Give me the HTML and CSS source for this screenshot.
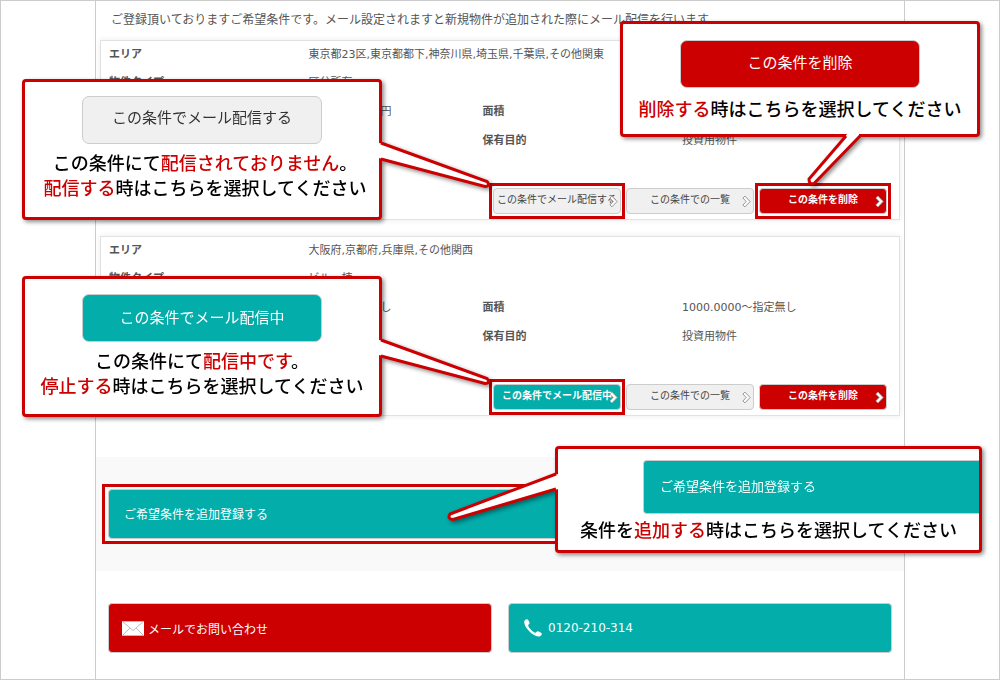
FILE: index.html
```html
<!DOCTYPE html>
<html lang="ja">
<head>
<meta charset="utf-8">
<meta name="viewport" content="width=device-width, initial-scale=1">
<title>ご希望条件</title>
<link rel="stylesheet" href="styles.css">
</head>
<body>
<svg class="defs" aria-hidden="true">
  <symbol id="chevron" viewBox="0 0 10 14"><path d="M1 3.2 3.2 1 9 7 3.2 13 1 10.800 4.700 7Z"/></symbol>
</svg>
<main class="column">
  <p class="intro">ご登録頂いておりますご希望条件です。メール設定されますと新規物件が追加された際にメール配信を行います。</p>

  <section class="card">
    <table class="specs">
      <colgroup><col class="c1"><col class="c2"><col class="c3"><col></colgroup>
      <tr><th>エリア</th><td colspan="3">東京都23区,東京都都下,神奈川県,埼玉県,千葉県,その他関東</td></tr>
      <tr><th>物件タイプ</th><td colspan="3">区分所有</td></tr>
      <tr><th></th><td><span class="amount">円</span></td><th>面積</th><td></td></tr>
      <tr><th></th><td></td><th>保有目的</th><td>投資用物件</td></tr>
    </table>
    <div class="actions">
      <button class="btn marked">この条件でメール配信する<svg class="chev"><use href="#chevron"/></svg></button>
      <button class="btn">この条件での一覧<svg class="chev"><use href="#chevron"/></svg></button>
      <button class="btn red marked">この条件を削除<svg class="chev"><use href="#chevron"/></svg></button>
    </div>
  </section>

  <section class="card">
    <table class="specs">
      <colgroup><col class="c1"><col class="c2"><col class="c3"><col></colgroup>
      <tr><th>エリア</th><td colspan="3">大阪府,京都府,兵庫県,その他関西</td></tr>
      <tr><th>物件タイプ</th><td colspan="3">ビル一棟</td></tr>
      <tr><th></th><td><span class="amount">し</span></td><th>面積</th><td>1000.0000～指定無し</td></tr>
      <tr><th></th><td></td><th>保有目的</th><td>投資用物件</td></tr>
    </table>
    <div class="actions">
      <button class="btn teal marked">この条件でメール配信中<svg class="chev"><use href="#chevron"/></svg></button>
      <button class="btn">この条件での一覧<svg class="chev"><use href="#chevron"/></svg></button>
      <button class="btn red">この条件を削除<svg class="chev"><use href="#chevron"/></svg></button>
    </div>
  </section>

  <div class="band">
    <button class="wide teal marked">ご希望条件を追加登録する</button>
  </div>

  <div class="contacts">
    <button class="wide red">
      <svg class="mail" viewBox="0 0 22 15"><path fill="#fff" d="M0 0h22v15H0z"/><path fill="none" stroke="#bbb" d="M.5.5 11 9.500 21.500.5M.5 14.500 8 7M21.500 14.500 14 7M0 .5h22M0 14.500h22"/></svg>
      メールでお問い合わせ
    </button>
    <button class="wide teal">
      <svg class="phone" viewBox="0 0 18 18"><path fill="#fff" d="M.3 2.200C.8.900 2.200 0 3.300.300c.8.300 2.200 2.700 2.300 3.600.1.900-1.400 1.700-1.400 2.500 0 1.800 5.200 7.200 7 7.300.9 0 1.600-1.500 2.500-1.400.9.100 3.600 1.400 4 2.200.5 1-.7 2.500-2 3C10.800 18.600-1 8.300.300 2.200Z"/></svg>
      0120-210-314
    </button>
  </div>

  <aside class="callout send">
    <button class="sample">この条件でメール配信する</button>
    <p>この条件にて<em>配信されておりません</em>。<br><em>配信する</em>時はこちらを選択してください</p>
    <svg class="tail tail-right" viewBox="0 0 112 50"><path class="fill" d="M0 4 4 5 109 43Q111 47 106 47L4 20 0 19Z"/><path class="line" d="M2 4 108 42.500Q112 47 106 47.500L2 20"/></svg>
  </aside>

  <aside class="callout delete">
    <button class="sample red">この条件を削除</button>
    <p><em>削除する</em>時はこちらを選択してください</p>
    <svg class="tail tail-down" viewBox="0 0 60 56"><path class="fill" d="M42 0 40 3 4 46Q5 51 10 49L54 4V0Z"/><path class="line" d="M41 2 4 45Q4 51 9 49.500L55 2"/></svg>
  </aside>

  <aside class="callout sending">
    <button class="sample teal">この条件でメール配信中</button>
    <p>この条件にて<em>配信中です</em>。<br><em>停止する</em>時はこちらを選択してください</p>
    <svg class="tail tail-right" viewBox="0 0 112 50"><path class="fill" d="M0 4 4 5 109 43Q111 47 106 47L4 20 0 19Z"/><path class="line" d="M2 4 108 42.500Q112 47 106 47.500L2 20"/></svg>
  </aside>

  <aside class="callout add">
    <button class="sample teal">ご希望条件を追加登録する</button>
    <p>条件を<em>追加する</em>時はこちらを選択してください</p>
    <svg class="tail tail-left" viewBox="0 0 112 54"><path class="fill" d="M112 3 109 4 4 43Q1 48 7 48L109 19 112 18Z"/><path class="line" d="M110 3 4 43Q1 48 7 48.500L110 18"/></svg>
  </aside>
</main>
</body>
</html>
```
FILE: styles.css
```css
* { box-sizing: border-box; }

body {
  margin: 0;
  min-height: 100vh;
  display: flex;
  justify-content: center;
  border: 1px solid #ccc;
  background: #fff;
  color: #555;
  font-family: "DejaVu Sans", "Noto Sans CJK JP", sans-serif;
  font-size: 12px;
}

p { margin: 0; }
button { font: inherit; color: inherit; cursor: pointer; }
.defs { position: absolute; width: 0; height: 0; }

.column {
  position: relative;
  width: 100%;
  max-width: 810px;
  border: solid #ccc;
  border-width: 0 1px;
}

.intro { padding: 9px 15px 10px; line-height: 20px; white-space: nowrap; }

.card {
  margin: 0 4px 16px;
  padding-bottom: 5px;
  border: 1px solid #e2e2e2;
  box-shadow: 0 0 6px rgba(0, 0, 0, .08);
}

.specs {
  width: 100%;
  table-layout: fixed;
  border-spacing: 0;
  margin-bottom: 33px;
  font-size: 11px;
  line-height: 28px;
}
.specs th, .specs td { height: 28px; padding: 0 0 0 8px; text-align: left; white-space: nowrap; }
.specs tr:nth-child(n+3) > * { height: 29px; }
.c1, .c3 { width: 25%; }
.c2 { width: 174px; }
.amount { display: block; width: 83px; text-align: right; }

.actions { display: flex; justify-content: flex-end; gap: 5px; padding-right: 12px; }

.btn {
  position: relative;
  width: 128px;
  height: 26px;
  padding: 0 0 2px;
  border: 1px solid #ccc;
  border-radius: 4px;
  background: #f0f0f0;
  color: #444;
  font-size: 10px;
  line-height: 20px;
  white-space: nowrap;
}
.chev { position: absolute; right: 2px; top: 6px; width: 9px; height: 13px; fill: #fff; stroke: #888; }
.btn.red, .btn.teal { font-weight: 700; }
.red { background: #c00; color: #fff; }
.teal { background: #02adaa; color: #fff; }
.btn.red .chev, .btn.teal .chev { stroke: #aaa; }

.marked { position: relative; }
.marked::after { content: ""; position: absolute; inset: -6px -5px; border: 3px solid #c00; }
.wide.marked::after { inset: -6px -7px; }

.band { margin-top: 41px; padding: 32px 12px; background: #f9f9f9; }
.wide {
  display: flex;
  align-items: center;
  width: 100%;
  height: 50px;
  padding: 0 15px 2px;
  border: 1px solid #ccc;
  border-radius: 4px;
  font-size: 12px;
}
.contacts { display: grid; grid-template-columns: 1fr 1fr; gap: 16px; padding: 32px 12px 26px; }
.contacts .wide { padding: 0 13px; gap: 4px; }
.mail { width: 22px; height: 15px; }
.phone { width: 18px; height: 18px; margin: 0 2px; }

.callout {
  position: absolute;
  width: 360px;
  border: 3px solid #c00;
  border-radius: 4px;
  background: #fff;
  color: #000;
  text-align: center;
  filter: drop-shadow(2px 2px 2px rgba(0, 0, 0, .45));
}
.callout p { font-size: 18px; font-weight: 500; line-height: 25px; white-space: nowrap; }
.callout em { color: #c00; font-style: normal; }
.send { left: -74px; top: 78px; padding: 14px 0 16px; }
.send p { padding-left: 6px; }
.sending { left: -74px; top: 275px; padding: 15px 0; }
.delete { left: 524px; top: 20px; padding: 16px 0 12px; }
.add { left: 459px; top: 445px; width: 427px; padding: 11px 0 7px; }

.sample {
  width: 240px;
  height: 48px;
  margin-bottom: 7px;
  padding: 0 0 4px;
  border: 1px solid #ccc;
  border-radius: 7px;
  font-size: 15px;
}
.send .sample { padding-bottom: 7px; background: #f0f0f0; color: #333; }
.delete .sample { margin-bottom: 9px; padding-bottom: 6px; }
.add .sample {
  display: block;
  width: 336px;
  height: 54px;
  margin: 0 0 4px auto;
  padding: 0 16px 4px;
  border-right: 0;
  border-radius: 4px 0 0 4px;
  font-size: 13px;
  text-align: left;
}

.tail { position: absolute; }
.tail .fill { fill: #fff; }
.tail .line { fill: none; stroke: #c00; stroke-width: 3; }
.tail-right { width: 112px; height: 50px; right: -112px; top: 57px; }
.tail-down { width: 60px; height: 56px; left: 182px; bottom: -56px; }
.tail-left { width: 112px; height: 54px; left: -112px; top: 22px; }
```
